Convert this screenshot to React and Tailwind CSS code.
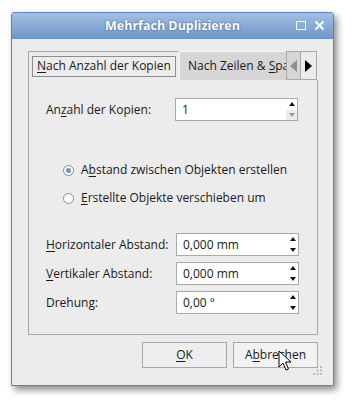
import React from "react";

const U = ({ children }) => <span className="underline underline-offset-2">{children}</span>;

function Spin({ value, downOff }) {
  return (
    <div className="flex h-[23px] w-[123px] border border-[#a9a9a9] bg-white">
      <div className="flex flex-1 items-center pl-[6px] text-[#1a1a1a]">
        <span>{value}</span>
      </div>
      <div className="flex w-[11px] flex-col">
        <div className="flex flex-1 items-center justify-center">
          <svg width="6" height="4" viewBox="0 0 6 4"><path d="M0 4 L3 0 L6 4 Z" fill="#111" /></svg>
        </div>
        <div className={`flex flex-1 items-center justify-center ${downOff ? "bg-[#ececec]" : ""}`}>
          <svg width="6" height="4" viewBox="0 0 6 4"><path d="M0 0 L3 4 L6 0 Z" fill={downOff ? "#9a9a9a" : "#111"} /></svg>
        </div>
      </div>
    </div>
  );
}

function Radio({ checked, children }) {
  return (
    <div className="flex items-center gap-[7px] pl-[17px]">
      <div className="flex h-[11px] w-[11px] items-center justify-center rounded-full border border-[#8a8a8a] bg-white">
        {checked && <div className="h-[5px] w-[5px] rounded-full bg-[#6a95cf]" />}
      </div>
      <span className="whitespace-nowrap">{children}</span>
    </div>
  );
}

function Row({ label, value }) {
  return (
    <div className="flex items-center">
      <div className="w-[130px] whitespace-nowrap">{label}</div>
      <Spin value={value} />
    </div>
  );
}

export default function App() {
  return (
    <div className="h-[405px] w-[353px] bg-white pl-[11px] pt-[12px]" style={{ fontFamily: '"Open Sans", "Noto Sans", sans-serif' }}>
      <div className="relative flex h-[374px] w-[323px] flex-col rounded-t-[3px] border border-[#5b86bd] bg-[#ececec] text-[12px] text-[#1a1a1a] shadow-[3px_4px_7px_rgba(0,0,0,0.45)]">
        <div className="relative flex h-[26px] items-center justify-center bg-gradient-to-b from-[#a3c0e3] to-[#6c96c8]">
          <span className="text-[12.5px] font-bold text-white [text-shadow:0_0_2px_rgba(40,60,100,0.8)]">Mehrfach Duplizieren</span>
          <div className="absolute right-[8px] top-[7px] flex items-center gap-[8px]">
            <div className="h-[9px] w-[10px] border-[1.5px] border-white" />
            <svg width="11" height="11" viewBox="0 0 11 11"><path d="M1.5 1.5 L9.5 9.5 M9.5 1.5 L1.5 9.5" stroke="white" strokeWidth="2" /></svg>
          </div>
        </div>

        <div className="ml-[16px] mt-[12px] flex w-[290px] flex-col">
          <div className="flex h-[29px]">
            <div className="flex w-[151px] items-center border-l border-t border-[#a9a9a9] bg-[#ececec] pl-[3px]">
              <div className="flex h-[21px] w-[144px] items-center border border-[#8d8d8d] pl-[4px]">
                <span className="whitespace-nowrap"><U>N</U>ach Anzahl der Kopien</span>
              </div>
            </div>
            <div className="flex w-[107px] items-center overflow-hidden border-l border-t border-l-[#f6f6f6] border-t-[#f6f6f6] bg-[#d6d6d6] pl-[8px]">
              <span className="whitespace-nowrap">Nach Zeilen &amp; <U>S</U>palten</span>
            </div>
            <div className="flex w-[15px] items-center justify-center border border-[#a9a9a9] bg-[#d6d6d6]">
              <svg width="7" height="12" viewBox="0 0 7 12"><path d="M7 0 L0 6 L7 12 Z" fill="#8e8e8e" /></svg>
            </div>
            <div className="flex w-[16px] items-center justify-center border-y border-r border-[#a9a9a9] bg-[#ececec]">
              <svg width="7" height="12" viewBox="0 0 7 12"><path d="M0 0 L7 6 L0 12 Z" fill="#000" /></svg>
            </div>
          </div>

          <div className="flex h-[255px] flex-col border-x border-b border-[#a9a9a9] pl-[17px] pt-[18px]">
            <div className="flex items-center">
              <div className="w-[129px] whitespace-nowrap">An<U>z</U>ahl der Kopien:</div>
              <Spin value="1" downOff />
            </div>
            <div className="mt-[40px] flex flex-col gap-[10px]">
              <Radio checked>A<U>b</U>stand zwischen Objekten erstellen</Radio>
              <Radio><U>E</U>rstellte Objekte verschieben um</Radio>
            </div>
            <div className="mt-[26px] flex flex-col gap-[6px]">
              <Row label={<><U>H</U>orizontaler Abstand:</>} value="0,000 mm" />
              <Row label={<><U>V</U>ertikaler Abstand:</>} value="0,000 mm" />
              <Row label="Drehung:" value="0,00 °" />
            </div>
          </div>
        </div>

        <div className="mr-[15px] mt-[7px] flex justify-end gap-[6px]">
          <div className="flex h-[26px] w-[85px] items-center justify-center border border-[#a9a9a9] bg-[#eeeeee]">
            <span><U>O</U>K</span>
          </div>
          <div className="flex h-[26px] w-[85px] items-center justify-center border border-[#a9a9a9] bg-[#f2f2f2]">
            <span>A<U>b</U>brechen</span>
          </div>
        </div>

        <svg className="absolute bottom-[9px] right-[10px]" width="10" height="10" viewBox="0 0 10 10">
          <g fill="#bdbdbd">
            <rect x="7" y="0" width="2" height="2" />
            <rect x="3.5" y="3.5" width="2" height="2" />
            <rect x="7" y="3.5" width="2" height="2" />
            <rect x="0" y="7" width="2" height="2" />
            <rect x="3.5" y="7" width="2" height="2" />
            <rect x="7" y="7" width="2" height="2" />
          </g>
        </svg>

        <svg className="absolute left-[266px] top-[337px]" width="14" height="22" viewBox="0 0 14 22">
          <path d="M1 1 L1 17 L5 13 L8 20 L10.5 19 L7.5 12 L13 12 Z" fill="white" stroke="black" strokeWidth="1" strokeLinejoin="round" />
        </svg>
      </div>
    </div>
  );
}
